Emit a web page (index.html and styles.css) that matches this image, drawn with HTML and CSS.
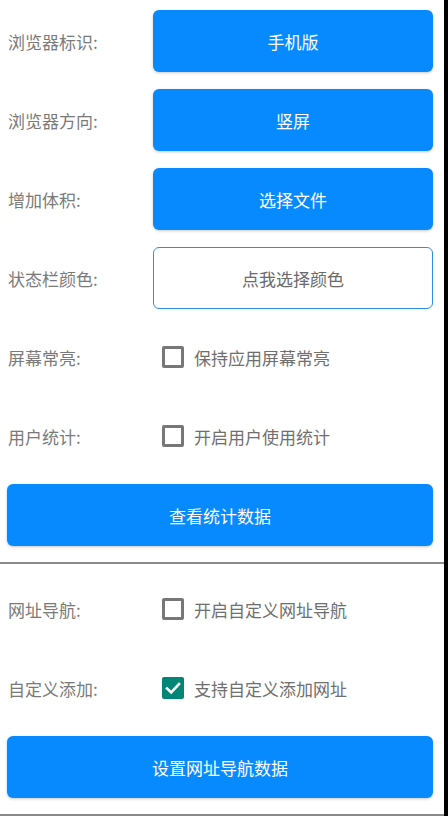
FILE: index.html
```html
<!DOCTYPE html>
<html lang="zh">
<head>
<meta charset="utf-8">
<title>设置</title>
<link rel="stylesheet" href="styles.css">
</head>
<body>
<div class="page">
  <section class="section first">
    <div class="row">
      <span class="label">浏览器标识:</span>
      <button class="btn">手机版</button>
    </div>
    <div class="row">
      <span class="label">浏览器方向:</span>
      <button class="btn">竖屏</button>
    </div>
    <div class="row">
      <span class="label">增加体积:</span>
      <button class="btn">选择文件</button>
    </div>
    <div class="row">
      <span class="label">状态栏颜色:</span>
      <button class="btn outline">点我选择颜色</button>
    </div>
    <div class="row">
      <span class="label">屏幕常亮:</span>
      <label class="check"><span class="box"></span><span class="check-text">保持应用屏幕常亮</span></label>
    </div>
    <div class="row">
      <span class="label">用户统计:</span>
      <label class="check"><span class="box"></span><span class="check-text">开启用户使用统计</span></label>
    </div>
    <div class="row">
      <button class="btn wide">查看统计数据</button>
    </div>
  </section>
  <hr class="divider">
  <section class="section second">
    <div class="row">
      <span class="label">网址导航:</span>
      <label class="check"><span class="box"></span><span class="check-text">开启自定义网址导航</span></label>
    </div>
    <div class="row">
      <span class="label">自定义添加:</span>
      <label class="check"><span class="box checked"><svg viewBox="0 0 22 22" width="22" height="22"><polyline points="5,11.5 9.2,15.5 17,7" fill="none" stroke="#fff" stroke-width="2.6" stroke-linecap="square"/></svg></span><span class="check-text">支持自定义添加网址</span></label>
    </div>
    <div class="row">
      <button class="btn wide">设置网址导航数据</button>
    </div>
  </section>
  <hr class="divider">
</div>
</body>
</html>
```

FILE: styles.css
```css
html {
  background: #000;
}
body {
  margin: 0;
  background: #000;
  font-family: "Noto Sans CJK SC", "Noto Sans", Roboto, sans-serif;
}
.page {
  width: 444px;
  height: 816px;
  background: #fff;
  display: flex;
  flex-direction: column;
  overflow: hidden;
}
.section {
  display: flex;
  flex-direction: column;
  gap: 17px;
  padding: 0 11px 16px 7px;
}
.section.first {
  padding-top: 10px;
}
.section.second {
  padding-top: 14px;
}
.row {
  height: 62px;
  display: flex;
  align-items: center;
}
.label {
  width: 146px;
  flex: none;
  padding-left: 1px;
  box-sizing: border-box;
  font-size: 17px;
  color: #7a7a7a;
  line-height: 1;
}
.btn {
  flex: 1;
  height: 62px;
  border: none;
  border-radius: 6px;
  background: #088aff;
  color: #fff;
  font-family: inherit;
  font-size: 17px;
  padding: 0;
  box-shadow: 0 1px 3px rgba(0, 0, 0, 0.22);
}
.btn.outline {
  background: #fff;
  color: #6a6a6a;
  border: 1.5px solid #2d8ee8;
  box-shadow: none;
}
.btn.wide {
  width: 100%;
}
.check {
  display: flex;
  align-items: center;
  padding-left: 9px;
}
.box {
  width: 22px;
  height: 22px;
  box-sizing: border-box;
  border: 3px solid #777;
  border-radius: 2px;
  flex: none;
  display: flex;
}
.box.checked {
  border: none;
  background: #008577;
}
.check-text {
  margin-left: 10px;
  font-size: 17px;
  color: #6f6f6f;
  line-height: 1;
}
.divider {
  margin: 0;
  border: none;
  height: 2px;
  background: #8a8a8a;
  flex: none;
}
```
